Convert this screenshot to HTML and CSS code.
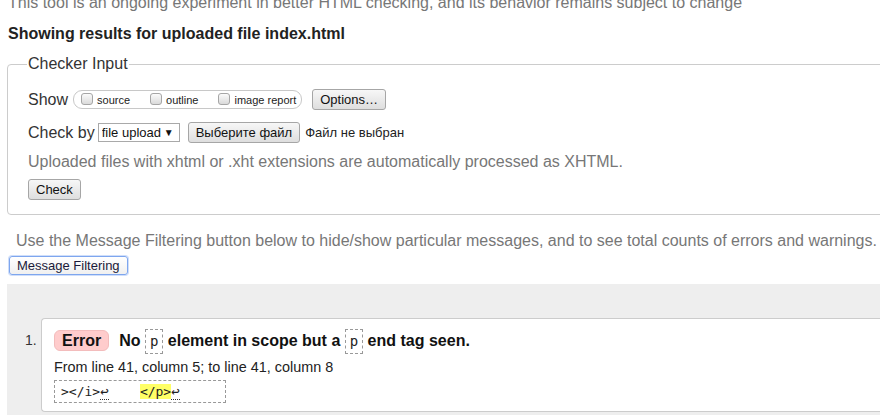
FILE: index.html
```html
<!DOCTYPE html>
<html lang="en">
<head>
<meta charset="utf-8">
<title>Showing results for uploaded file index.html - Nu Html Checker</title>
<link rel="stylesheet" href="styles.css">
</head>
<body>
<div class="page">
  <p class="intro">This tool is an ongoing experiment in better HTML checking, and its behavior remains subject to change</p>
  <p class="results">Showing results for uploaded file index.html</p>
  <form class="form">
    <fieldset class="checker">
      <legend class="legend">Checker Input</legend>
      <div class="row">
        <span class="lbl">Show</span>
        <fieldset class="opts">
          <label class="opt"><input type="checkbox" class="cb"><span>source</span></label>
          <label class="opt"><input type="checkbox" class="cb"><span>outline</span></label>
          <label class="opt"><input type="checkbox" class="cb"><span>image report</span></label>
        </fieldset>
        <button type="button" class="btn">Options…</button>
      </div>
      <div class="row row-check">
        <span class="lbl">Check by</span>
        <span class="select-wrap"><select class="sel"><option>file upload</option></select><span class="arrow">▼</span></span>
        <span class="file"><button type="button" class="btn">Выберите файл</button><span class="nofile">Файл не выбран</span></span>
      </div>
      <p class="note">Uploaded files with xhtml or .xht extensions are automatically processed as XHTML.</p>
      <button type="button" class="btn">Check</button>
    </fieldset>
  </form>
  <p class="filter-note">Use the Message Filtering button below to hide/show particular messages, and to see total counts of errors and warnings.</p>
  <button type="button" class="btn btn-focus">Message Filtering</button>
  <div class="results-area">
    <ol class="messages">
      <li class="item">
        <span class="num">1.</span>
        <div class="card">
          <p class="msg"><strong class="badge">Error</strong><span class="msgtext">No <code class="tag">p</code> element in scope but a <code class="tag">p</code> end tag seen.</span></p>
          <p class="loc">From line 41, column 5; to line 41, column 8</p>
          <p class="extract"><code class="ext">&gt;&lt;/i&gt;<span class="lf">↩</span>    <b class="hl">&lt;/p&gt;</b><span class="lf">↩</span>     </code></p>
        </div>
      </li>
    </ol>
  </div>
</div>
</body>
</html>
```
FILE: styles.css
```css
html, body {
  margin: 0;
  padding: 0;
  background: #fff;
}
body {
  font-family: "Liberation Sans", Arial, sans-serif;
  font-size: 16px;
  color: #222;
  overflow: hidden;
}
.page {
  width: 1000px;
  padding-left: 7px;
}
.intro {
  margin: -6px 0 0 1px;
  color: #777;
}
.results {
  margin: 13px 0 0 1px;
  font-weight: bold;
  color: #222;
}
.form {
  margin: 12px 0 0;
}
.checker {
  margin: 0;
  border: 1px solid #ccc;
  border-radius: 4px;
  padding: 16px 20px 14px;
}
.legend {
  padding: 0 1px;
  margin-left: -1px;
  color: #333;
}
.row {
  display: flex;
  align-items: center;
  height: 21px;
}
.row-check {
  margin-top: 12px;
}
.lbl {
  color: #333;
  margin-right: 5px;
}
.row-check .lbl {
  margin-right: 3px;
}
.opts {
  display: flex;
  align-items: center;
  margin: 0 10px 0 0;
  padding: 0 5px 0 7px;
  height: 17px;
  border: 1px solid #c8c8c8;
  border-radius: 9px;
  font-size: 11px;
  color: #222;
  gap: 20px;
}
.opt {
  display: flex;
  align-items: center;
  gap: 4px;
}
.cb {
  appearance: none;
  -webkit-appearance: none;
  margin: -2px 0 0 0;
  width: 12px;
  height: 12px;
  border: 1px solid #a6a6a6;
  border-radius: 3px;
  background: linear-gradient(#fbfbfb, #dadada);
}
.btn {
  font-family: "Liberation Sans", Arial, sans-serif;
  font-size: 13px;
  color: #111;
  height: 21px;
  padding: 0 7px;
  border: 1px solid #a6a6a6;
  border-radius: 3px;
  background: linear-gradient(#f7f7f7, #dedede);
  margin: 0;
}
.select-wrap {
  display: inline-flex;
  align-items: center;
  height: 17px;
  width: 80px;
  border: 1px solid #a9a9a9;
  background: #fff;
  margin-right: 8px;
}
.sel {
  appearance: none;
  -webkit-appearance: none;
  border: 0;
  background: transparent;
  font-family: "Liberation Sans", Arial, sans-serif;
  font-size: 13px;
  color: #111;
  padding: 0 0 0 3px;
  margin: 0;
  width: 65px;
  outline: none;
}
.arrow {
  font-size: 10px;
  color: #111;
}
.file {
  display: inline-flex;
  align-items: center;
  font-size: 13px;
  color: #222;
}
.nofile {
  margin-left: 5px;
}
.note {
  margin: 10px 0 8px;
  color: #777;
}
.filter-note {
  margin: 17px 0 0 9px;
  color: #777;
}
.btn-focus {
  margin: 6px 0 0 2px;
  height: 19px;
  border: 1px solid #7ea6ee;
  box-shadow: 0 0 0 1px #cfdefa;
  background: linear-gradient(#ffffff, #f0f0f0);
  border-radius: 3px;
  color: #1a1a3a;
}
.results-area {
  margin-top: 9px;
  background: #eee;
  padding: 34px 0 30px;
}
.messages {
  list-style: none;
  margin: 0;
  padding: 0 0 0 18px;
}
.item {
  display: flex;
  align-items: flex-start;
}
.num {
  width: 16px;
  flex: none;
  font-size: 14px;
  color: #333;
  padding-top: 14px;
}
.card {
  flex: 1;
  background: #fff;
  border: 1px solid #ccc;
  border-right: 0;
  border-radius: 4px 0 0 4px;
  padding: 10px 12px 8px;
}
.msg {
  margin: 0;
  font-weight: bold;
  line-height: 24px;
}
.badge {
  display: inline-block;
  background: #fcc;
  border: 1px solid #f3bcbc;
  border-radius: 6px;
  padding: 0 7px;
  line-height: 19px;
  margin-right: 10px;
  color: #111;
}
.msgtext {
  color: #111;
}
.tag {
  display: inline-block;
  font-family: "DejaVu Sans Mono", "Liberation Mono", monospace;
  font-weight: normal;
  font-size: 14px;
  line-height: 17px;
  padding: 3px 4px;
  border: 1px dashed #999;
  color: #222;
}
.loc {
  margin: 5px 0 0;
  font-size: 14.4px;
  color: #222;
}
.extract {
  margin: 5px 0 0;
}
.ext {
  display: inline-block;
  font-family: "DejaVu Sans Mono", "Liberation Mono", monospace;
  font-size: 13px;
  line-height: 16px;
  white-space: pre;
  padding: 2px 6px;
  border: 1px dashed #999;
  color: #222;
}
.lf {
  font-size: 14px;
  border-bottom: 1px dotted #333;
}
.hl {
  font-weight: normal;
  background: #ff6;
}
```
